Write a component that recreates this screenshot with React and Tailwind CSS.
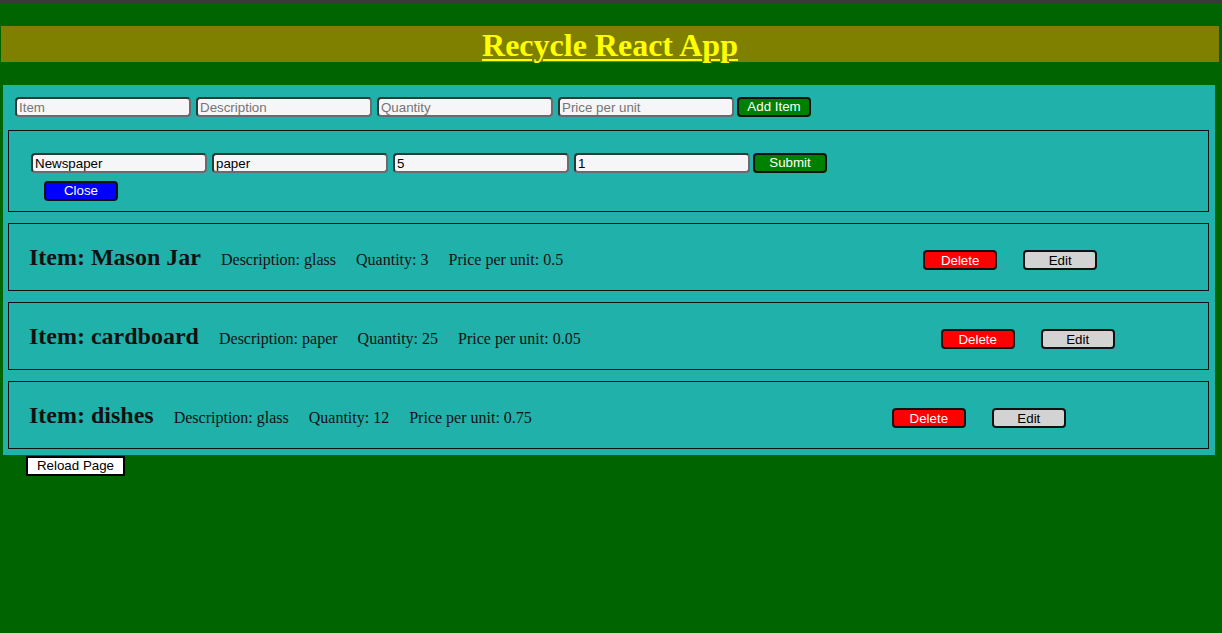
import React, { useState } from "react";

const items = [
  { name: "Mason Jar", description: "glass", quantity: 3, price: 0.5 },
  { name: "cardboard", description: "paper", quantity: 25, price: 0.05 },
  { name: "dishes", description: "glass", quantity: 12, price: 0.75 },
];

const inputCls =
  "w-[176px] h-[20px] border-2 border-[#2a3a3a] border-b-[#6b6b6b] border-r-[#6b6b6b] rounded-[4px] bg-[#f6f6f8] px-[2px] text-[13.33px] text-black placeholder:text-[#757575] outline-none font-['Liberation_Sans',Arial,sans-serif]";

const btnCls =
  "w-[74px] h-[20px] border-2 border-[#111] rounded-[4px] text-[13.33px] leading-none font-['Liberation_Sans',Arial,sans-serif]";

const App = () => {
  const [editing] = useState({ name: "Newspaper", description: "paper", quantity: "5", price: "1" });

  return (
    <div className="min-h-screen bg-[#006400] font-['Liberation_Serif','Times_New_Roman',serif]">
      <div className="h-[4px] bg-[#3a3a3a]"></div>
      <div className="h-[22px]"></div>

      {/* Header */}
      <div className="mx-[1px] w-[1218px] h-[36px] bg-[#808000] flex items-center justify-center">
        <h1 className="text-[32px] leading-none font-bold text-[#ffff00] underline decoration-2 underline-offset-[3px] mt-[1px]">
          Recycle React App
        </h1>
      </div>

      <div className="h-[23px]"></div>

      {/* Main panel */}
      <div className="ml-[3px] w-[1212px] bg-[#20b2aa] pt-[12px] pb-[6px]">
        <div className="flex items-center pl-[12px]">
          <input className={inputCls} placeholder="Item" />
          <input className={inputCls + " ml-[5px]"} placeholder="Description" />
          <input className={inputCls + " ml-[5px]"} placeholder="Quantity" />
          <input className={inputCls + " ml-[5px]"} placeholder="Price per unit" />
          <button className={btnCls + " ml-[3px] bg-[#008000] text-white"}>Add Item</button>
        </div>

        {/* Edit box */}
        <div className="mt-[13px] ml-[5px] w-[1201px] h-[82px] border border-[#111] pt-[22px] pl-[22px]">
          <div className="flex items-center">
            <input className={inputCls} defaultValue={editing.name} />
            <input className={inputCls + " ml-[5px]"} defaultValue={editing.description} />
            <input className={inputCls + " ml-[5px]"} defaultValue={editing.quantity} />
            <input className={inputCls + " ml-[5px]"} defaultValue={editing.price} />
            <button className={btnCls + " ml-[3px] bg-[#008000] text-white"}>Submit</button>
          </div>
          <button className={btnCls + " block mt-[8px] ml-[13px] bg-[#0000ff] text-white"}>Close</button>
        </div>

        {/* Items */}
        {items.map((item, index) => (
          <div
            key={index}
            className="mt-[11px] ml-[5px] w-[1201px] h-[68px] border border-[#111] flex items-center pl-[20px] pt-[2px]"
          >
            <div className="flex items-baseline">
              <h2 className="text-[24px] leading-none font-bold text-[#111]">Item: {item.name}</h2>
              <span className="ml-[20px] text-[16px] text-[#111]">Description: {item.description}</span>
              <span className="ml-[20px] text-[16px] text-[#111]">Quantity: {item.quantity}</span>
              <span className="ml-[20px] text-[16px] text-[#111]">Price per unit: {item.price}</span>
              <button className={btnCls + " ml-[360px] bg-[#ff0000] text-white"}>Delete</button>
              <button className={btnCls + " ml-[26px] bg-[#d3d3d3] text-black"}>Edit</button>
            </div>
          </div>
        ))}
      </div>

      <button className="block ml-[26px] mt-[1px] w-[99px] h-[20px] bg-white border-2 border-black text-[13.33px] leading-none text-black font-['Liberation_Sans',Arial,sans-serif]">
        Reload Page
      </button>
    </div>
  );
};

export default App;
